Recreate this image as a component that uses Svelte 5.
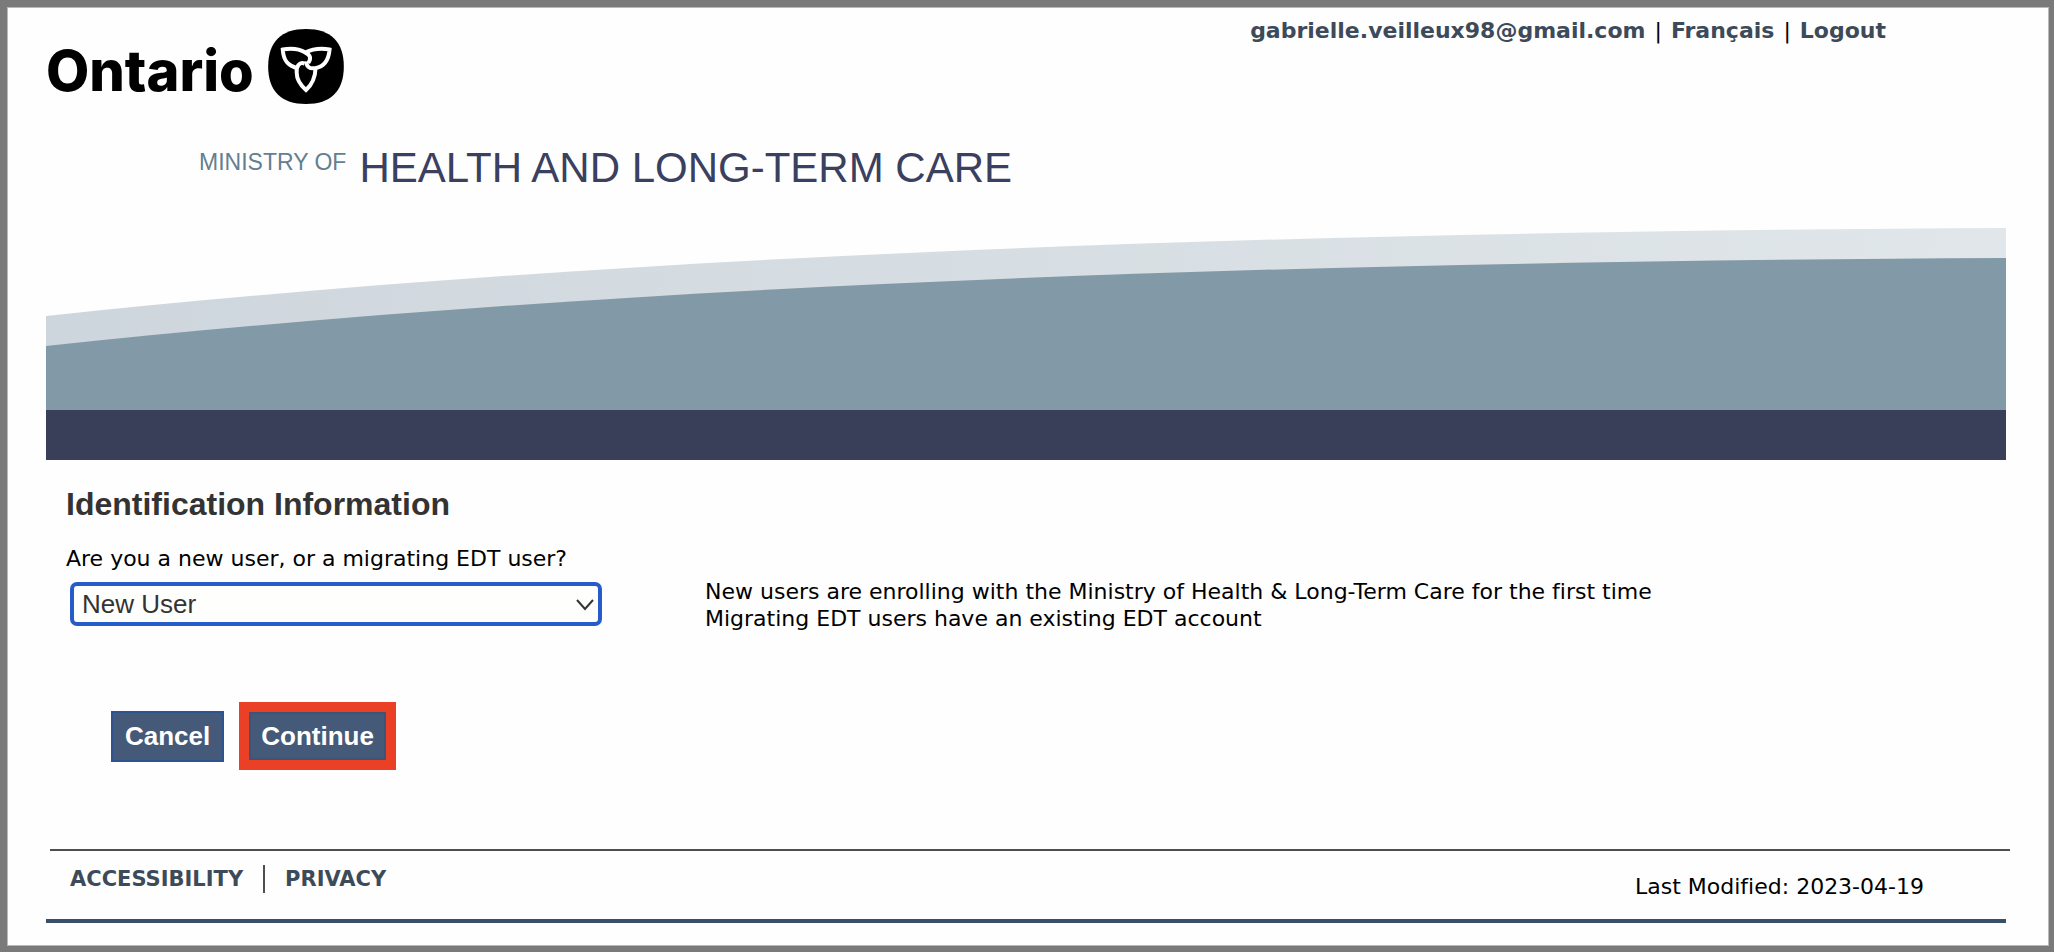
<script lang="ts">
	let userType = 'new';

	const email = 'gabrielle.veilleux98@gmail.com';
	const lastModified = '2023-04-19';

	const userTypes: { value: string; label: string }[] = [
		{ value: 'new', label: 'New User' },
		{ value: 'migrating', label: 'Migrating EDT User' }
	];
</script>

<div class="frame">
	<div class="page">
		<header>
			<div class="top">
				<a class="logo" href="#home" aria-label="Ontario">
					<span>Ontario</span>
					<svg viewBox="0 0 228 226" aria-hidden="true">
						<path
							d="M114 0C188 0 228 38 228 113S188 226 114 226S0 188 0 113S40 0 114 0Z"
							fill="#000"
						/>
						<g fill="none" stroke="#fff" stroke-width="12">
							<path d="M121 102C130 90 128 78 112 71C92 59 66 58 44 62C46 94 58 112 90 118" />
							<path d="M112 71C138 58 162 58 185 62C182 96 166 114 142 118C124 121 114 112 116 98" />
							<path d="M110 104C94 98 84 112 86 132C86 152 98 170 114 184C132 168 142 148 143 116" />
						</g>
					</svg>
				</a>
				<nav class="user">
					<a href="#account">{email}</a>
					<span>|</span>
					<a href="#fr">Français</a>
					<span>|</span>
					<a href="#logout">Logout</a>
				</nav>
			</div>
			<div class="ministry">
				<span class="small">MINISTRY OF</span>
				<span class="big">HEALTH AND LONG-TERM CARE</span>
			</div>
			<svg class="wave" viewBox="0 0 1960 182" preserveAspectRatio="none" aria-hidden="true">
				<defs>
					<linearGradient id="haze">
						<stop offset="0" stop-color="#ced6dd" />
						<stop offset="1" stop-color="#e0e6e9" />
					</linearGradient>
				</defs>
				<path d="M0 88C560 28 1200 4 1960 0V182H0Z" fill="url(#haze)" />
				<path d="M0 118C560 58 1200 34 1960 30V182H0Z" fill="#8299a7" />
			</svg>
			<div class="bar"></div>
		</header>

		<main>
			<h1>Identification Information</h1>
			<form on:submit|preventDefault>
				<label for="userType">Are you a new user, or a migrating EDT user?</label>
				<div class="row">
					<div class="select">
						<select id="userType" bind:value={userType}>
							{#each userTypes as type}
								<option value={type.value}>{type.label}</option>
							{/each}
						</select>
						<svg viewBox="0 0 18 12" aria-hidden="true">
							<path d="M1 1L9 10L17 1" fill="none" stroke="#333" stroke-width="2" />
						</svg>
					</div>
					<p>
						New users are enrolling with the Ministry of Health &amp; Long-Term Care for the first time<br />
						Migrating EDT users have an existing EDT account
					</p>
				</div>
				<div class="buttons">
					<button type="button">Cancel</button>
					<div class="highlight"><button class="continue" type="submit">Continue</button></div>
				</div>
			</form>
		</main>

		<footer>
			<div class="footerContent">
				<nav>
					<a href="#accessibility">ACCESSIBILITY</a>
					<a href="#privacy">PRIVACY</a>
				</nav>
				<span>Last Modified: {lastModified}</span>
			</div>
		</footer>
	</div>
</div>

<style>
	:global(body) {
		margin: 0;
		background-color: #7a7a7a;
	}
	.frame {
		box-sizing: border-box;
		min-height: 100vh;
		padding: 7px 5px 6px 7px;
		display: flex;
		background-color: #7a7a7a;
		font-family: Verdana, 'DejaVu Sans', sans-serif;
		font-size: 22px;
		line-height: 27px;
		font-variant-ligatures: none;
		color: #000;
	}
	.page {
		box-sizing: border-box;
		flex: 1;
		min-width: 0;
		padding: 0 42px 0 38px;
		border: 1px solid #b8b8b8;
		background-color: #fefefe;
	}
	a {
		color: #3d4a5a;
		font-weight: 700;
		text-decoration: none;
	}

	.top {
		display: flex;
		justify-content: space-between;
		align-items: flex-start;
	}
	.logo {
		display: flex;
		align-items: flex-start;
		gap: 14px;
		padding-top: 21px;
		font-family: Inter, sans-serif;
		font-size: 56px;
		font-weight: 800;
		line-height: 75px;
		color: #000;
	}
	.logo span {
		padding-top: 5px;
	}
	.logo svg {
		width: 76px;
		height: 75px;
	}
	.user {
		display: flex;
		gap: 9px;
		padding-top: 9px;
		margin-right: 120px;
	}
	.ministry {
		display: flex;
		align-items: flex-start;
		gap: 13px;
		padding: 35px 0 36px 153px;
		font-family: 'Liberation Sans', Arial, sans-serif;
		line-height: 48px;
	}
	.ministry .small {
		font-size: 23px;
		line-height: 36px;
		color: #647f91;
	}
	.ministry .big {
		font-size: 42px;
		color: #3a4060;
	}
	.wave {
		display: block;
		width: 100%;
		height: 182px;
	}
	.bar {
		height: 50px;
		background-color: #393f59;
	}

	main {
		padding: 24px 20px 0;
	}
	h1 {
		margin: 0;
		font-family: 'Liberation Sans', Arial, sans-serif;
		font-size: 32px;
		line-height: 40px;
		color: #333;
	}
	label {
		display: block;
		margin-top: 21px;
	}
	.row {
		display: flex;
		gap: 103px;
		padding: 10px 0 0 4px;
	}
	.select {
		position: relative;
		width: 532px;
		height: 44px;
	}
	select {
		appearance: none;
		box-sizing: border-box;
		width: 100%;
		height: 100%;
		padding: 0 40px 0 8px;
		border: 4px solid #265cc9;
		border-radius: 7px;
		outline: none;
		background-color: #fefefc;
		font-family: 'Liberation Sans', Arial, sans-serif;
		font-size: 26px;
		color: #333;
	}
	.select svg {
		position: absolute;
		right: 8px;
		top: 17px;
		width: 18px;
		height: 12px;
		pointer-events: none;
	}
	p {
		margin: -4px 0 0;
	}
	.buttons {
		display: flex;
		align-items: center;
		gap: 15px;
		padding: 70px 0 0 45px;
	}
	button {
		box-sizing: border-box;
		height: 51px;
		padding: 0 12px;
		border: 2px solid #2f5290;
		background-color: #455a78;
		font-family: 'Liberation Sans', Arial, sans-serif;
		font-size: 26px;
		font-weight: 700;
		color: #fff;
	}
	.highlight {
		border: 10px solid #ea4025;
	}
	button.continue {
		display: block;
		height: 48px;
		padding: 0 10px;
		border-color: #3c5478;
	}

	footer {
		margin-top: 79px;
		border-bottom: 4px solid #3a4f6a;
	}
	.footerContent {
		display: flex;
		justify-content: space-between;
		align-items: flex-start;
		height: 54px;
		margin: 0 -4px 0 4px;
		padding: 14px 86px 0 20px;
		border-top: 2px solid #4f4d50;
	}
	footer nav {
		display: flex;
		font-size: 21px;
		line-height: 28px;
	}
	footer nav a + a {
		margin-left: 20px;
		padding-left: 20px;
		border-left: 2px solid #4f4d50;
	}
	footer span {
		padding-top: 8px;
	}
</style>
